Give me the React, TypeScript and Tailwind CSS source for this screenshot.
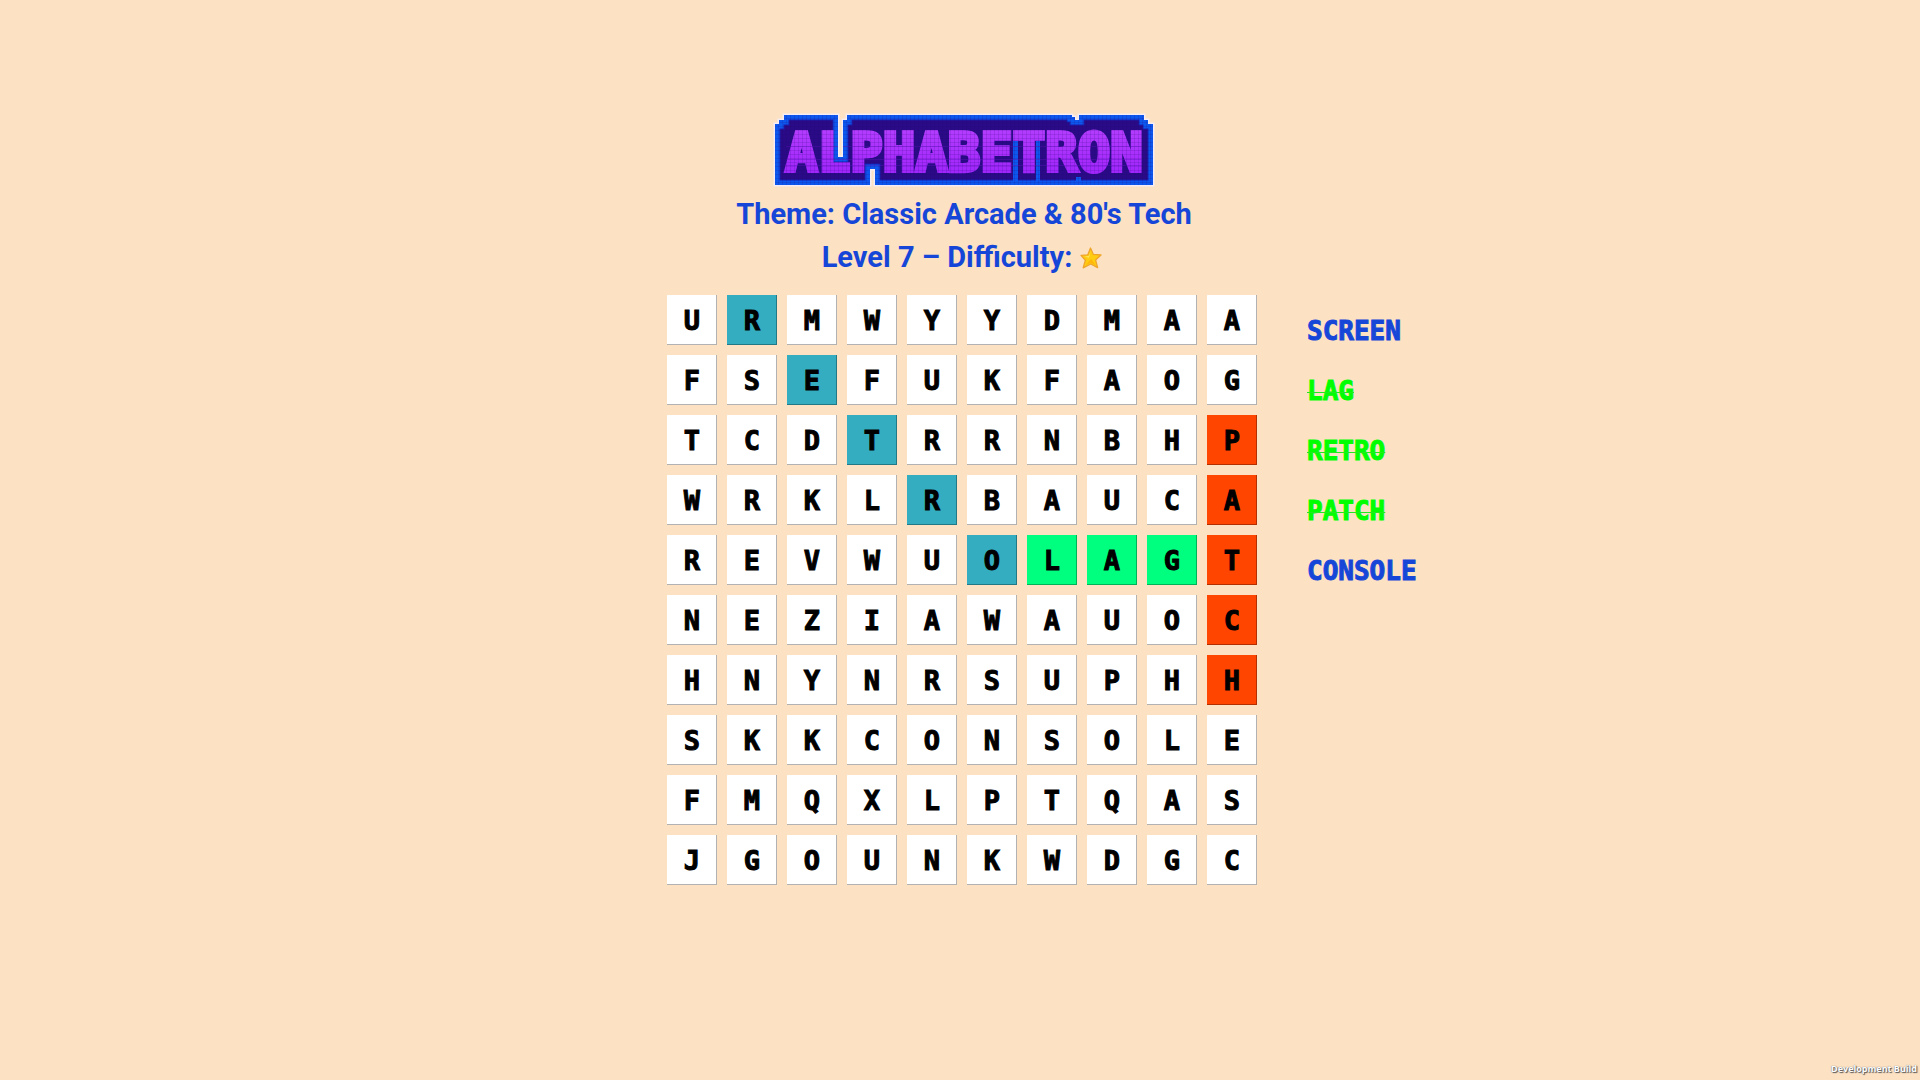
const rows = [
  'URMWYYDMAA',
  'FSEFUKFAOG',
  'TCDTRRNBHP',
  'WRKLRBAUCA',
  'REVWUOLAGT',
  'NEZIAWAUOC',
  'HNYNRSUPHH',
  'SKKCONSOLE',
  'FMQXLPTQAS',
  'JGOUNKWDGC',
];

const teal = 'bg-[#33adbf]';
const green = 'bg-[#00ff7f]';
const orange = 'bg-[#ff4500]';

const found: Record<string, string> = {
  '0-1': teal,
  '1-2': teal,
  '2-3': teal,
  '3-4': teal,
  '4-5': teal,
  '4-6': green,
  '4-7': green,
  '4-8': green,
  '2-9': orange,
  '3-9': orange,
  '4-9': orange,
  '5-9': orange,
  '6-9': orange,
};

const words = [
  { text: 'SCREEN', done: false },
  { text: 'LAG', done: true },
  { text: 'RETRO', done: true },
  { text: 'PATCH', done: true },
  { text: 'CONSOLE', done: false },
];

const plate =
  'M0 9H4V5H9V0H63V42H68V5H72V0H297V2H300V5H304V0H369V5H373V9H378V70H100V54H95V70H0Z';

function Logo() {
  return (
    <svg width="378" height="70" viewBox="0 0 378 70" className="block overflow-visible" role="img" aria-label="Alphabetron">
      <defs>
        <linearGradient id="face" x1="0" y1="0" x2="0" y2="1">
          <stop offset="0" stopColor="#b840ff" />
          <stop offset="1" stopColor="#9c20fa" />
        </linearGradient>
        <pattern id="scan" width="4" height="4" patternUnits="userSpaceOnUse">
          <path d="M0 3.5H4M3.5 0V4" stroke="#1c0670" strokeOpacity="0.14" />
        </pattern>
        <clipPath id="plate">
          <path d={plate} />
        </clipPath>
      </defs>
      <path d={plate} fill="none" stroke="#f6ecf4" strokeWidth="3" />
      <g clipPath="url(#plate)">
        <path d={plate} fill="#2a0a86" stroke="#1b1fae" strokeWidth="11" />
        <path d={plate} fill="none" stroke="#0d56ee" strokeWidth="9" />
        <path d="M238 26h5v40h-5zM261 26h4v40h-4zM301 62h5v5h-5z" fill="#0d56ee" />
        <text
          x="189"
          y="56"
          textAnchor="middle"
          fontSize="54"
          fontWeight="700"
          fill="url(#face)"
          stroke="url(#face)"
          strokeWidth="4"
          className="font-['DejaVu_Sans_Mono',monospace]"
        >
          ALPHABETRON
        </text>
        <path d={plate} fill="url(#scan)" />
        <path d="M11 31.5H367M11 44.5H367M11 50.5H367" stroke="#5a10b8" strokeOpacity="0.4" />
      </g>
    </svg>
  );
}

function Star() {
  return (
    <svg width="22" height="22" viewBox="0 0 22 22" aria-label="1 star" role="img">
      <path
        d="M10.5 1 13.4 7.4 21 8 15.6 13 17.6 20.6 10.8 17 3.2 20.8 5.4 13.2 1 8.4 7.8 7.8Z"
        fill="#ffcc12"
        stroke="#efa52c"
        strokeWidth="1.3"
        strokeLinejoin="round"
      />
      <path d="M10.6 4.2 8.8 9 4.6 9.4 9 10.8Z" fill="#ffe566" />
      <path d="M11 12 15.6 18.2 10.8 15.6 5.6 18.4Z" fill="#ffb40a" />
    </svg>
  );
}

export default function App() {
  return (
    <main className="relative min-h-screen bg-[#fce1c3] pt-[115px] pb-16 pl-1">
      <header className="flex flex-col items-center pl-1 font-['Roboto',sans-serif] text-[29px] leading-[43px] font-bold text-[#1646d8]">
        <h1>
          <Logo />
        </h1>
        <p className="mt-2">Theme: Classic Arcade &amp; 80's Tech</p>
        <p className="flex items-center gap-2 pr-1">
          Level 7 – Difficulty: <Star />
        </p>
      </header>

      <div className="mt-4 grid grid-cols-[1fr_auto_1fr] font-['DejaVu_Sans_Mono',monospace] font-bold">
        <div className="col-start-2 grid grid-cols-10 gap-[10px]">
          {rows.flatMap((row, r) =>
            row.split('').map((letter, c) => (
              <button
                key={`${r}-${c}`}
                type="button"
                className={`flex size-[50px] items-center justify-center text-[27px] leading-none text-black shadow-[inset_-1px_-1px_0_rgba(0,0,0,0.3)] [-webkit-text-stroke:1px_black] ${found[`${r}-${c}`] ?? 'bg-white'}`}
              >
                {letter}
              </button>
            )),
          )}
        </div>
        <ul className="pt-[6px] pl-[50px] text-[26px] leading-[60px] [-webkit-text-stroke:1px_currentColor]">
          {words.map((word) => (
            <li
              key={word.text}
              className={word.done ? 'text-[#00ff00] line-through decoration-[#22e822] decoration-1' : 'text-[#1646d8]'}
            >
              {word.text}
            </li>
          ))}
        </ul>
      </div>

      <p className="absolute right-[3px] bottom-0 font-['Open_Sans',sans-serif] text-[9px] leading-[22px] font-bold text-white [text-shadow:1px_1px_1px_#555,0_0_1px_#555]">
        Development Build
      </p>
    </main>
  );
}
